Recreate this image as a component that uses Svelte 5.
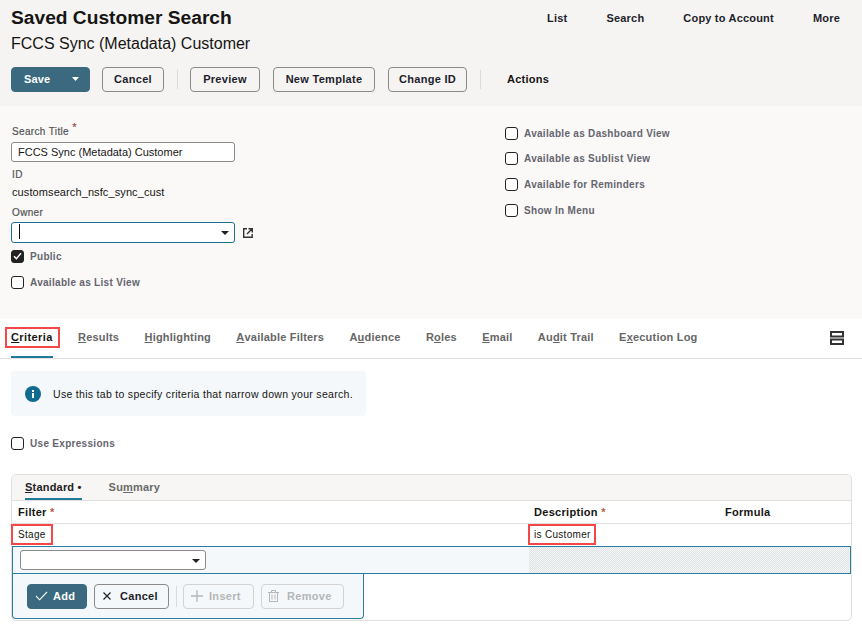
<script lang="ts">
  const navLinks = ['List', 'Search', 'Copy to Account', 'More'];
  const rightChecks = [
    'Available as Dashboard View',
    'Available as Sublist View',
    'Available for Reminders',
    'Show In Menu'
  ];
  // pre/key/post: key is the underlined access key
  const tabs = [
    { pre: '', key: 'R', post: 'esults' },
    { pre: '', key: 'H', post: 'ighlighting' },
    { pre: '', key: 'A', post: 'vailable Filters' },
    { pre: 'A', key: 'u', post: 'dience' },
    { pre: 'R', key: 'o', post: 'les' },
    { pre: '', key: 'E', post: 'mail' },
    { pre: 'Au', key: 'd', post: 'it Trail' },
    { pre: 'E', key: 'x', post: 'ecution Log' }
  ];
</script>

<div class="page">
  <header class="head">
    <div class="title-row">
      <h1>Saved Customer Search</h1>
      <nav class="links">
        {#each navLinks as link}
          <span>{link}</span>
        {/each}
      </nav>
    </div>
    <div class="subtitle">FCCS Sync (Metadata) Customer</div>
    <div class="toolbar">
      <button class="btn primary save">
        <span>Save</span>
        <svg width="7" height="4" viewBox="0 0 7 4"><path d="M0 0h7L3.5 4z" fill="#fff" /></svg>
      </button>
      <button class="btn w-cancel">Cancel</button>
      <i class="sep"></i>
      <button class="btn w-preview">Preview</button>
      <button class="btn w-template">New Template</button>
      <button class="btn w-change">Change ID</button>
      <i class="sep"></i>
      <span class="actions">Actions</span>
    </div>
  </header>

  <section class="form">
    <div class="col-left">
      <div class="label first">Search Title <sup>*</sup></div>
      <div class="input">FCCS Sync (Metadata) Customer</div>
      <div class="label id">ID</div>
      <div class="value">customsearch_nsfc_sync_cust</div>
      <div class="label owner">Owner</div>
      <div class="owner-row">
        <div class="input focus">
          <i class="caret"></i>
          <svg class="arrow" width="8" height="4" viewBox="0 0 8 4"><path d="M0 0h8L4 4z" fill="#222" /></svg>
        </div>
        <svg class="open-icon" width="10" height="10" viewBox="0 0 10 10" fill="none" stroke="#333" stroke-width="1.4">
          <path d="M4 .8H.7v8.5h8.5V6M5.5 .7h3.8v3.8M9.2 .8 4 6" />
        </svg>
      </div>
      <label class="check public">
        <span class="box on">
          <svg width="9" height="8" viewBox="0 0 9 8" fill="none" stroke="#fff" stroke-width="1.4"><path d="M1 4.2 3.4 6.6 8 1.2" /></svg>
        </span>
        Public
      </label>
      <label class="check list-view"><span class="box"></span>Available as List View</label>
    </div>
    <div class="col-right">
      {#each rightChecks as item}
        <label class="check"><span class="box"></span>{item}</label>
      {/each}
    </div>
  </section>

  <div class="tabs">
    <span class="tab active"><span class="mark"><u>C</u>riteria</span></span>
    {#each tabs as t}
      <span class="tab">{t.pre}<u>{t.key}</u>{t.post}</span>
    {/each}
    <svg class="layout-icon" width="14" height="14" viewBox="0 0 14 14" fill="none" stroke="#333" stroke-width="2">
      <rect x="1" y="1" width="12" height="4.5" />
      <rect x="1" y="8.5" width="12" height="4.5" />
    </svg>
  </div>

  <main class="content">
    <div class="info">
      <svg width="16" height="16" viewBox="0 0 16 16">
        <circle cx="8" cy="8" r="8" fill="#0f6b8f" />
        <rect x="7" y="7" width="2" height="5" fill="#fff" />
        <rect x="7" y="4" width="2" height="2" fill="#fff" />
      </svg>
      Use this tab to specify criteria that narrow down your search.
    </div>

    <label class="check expr"><span class="box"></span>Use Expressions</label>

    <div class="panel">
      <div class="subtabs">
        <span class="subtab active"><u>S</u>tandard •</span>
        <span class="subtab">Su<u>m</u>mary</span>
      </div>
      <div class="grid-row heads">
        <div>Filter <b>*</b></div>
        <div>Description <b>*</b></div>
        <div>Formula</div>
      </div>
      <div class="grid-row data">
        <div><span class="mark cell">Stage</span></div>
        <div><span class="mark cell desc">is Customer</span></div>
        <div></div>
      </div>
      <div class="edit-row">
        <div class="edit-left">
          <div class="input select">
            <svg class="arrow" width="8" height="4" viewBox="0 0 8 4"><path d="M0 0h8L4 4z" fill="#222" /></svg>
          </div>
        </div>
        <div class="hatch"></div>
      </div>
      <div class="row-actions">
        <button class="btn primary add">
          <svg width="13" height="10" viewBox="0 0 13 10" fill="none" stroke="#fff" stroke-width="1.1"><path d="M1 5l3.6 3.8L12 1" /></svg>
          Add
        </button>
        <button class="btn dark">
          <svg width="8" height="8" viewBox="0 0 8 8" fill="none" stroke="#222" stroke-width="1.2"><path d="M.5 .5l7 7M7.5 .5l-7 7" /></svg>
          Cancel
        </button>
        <i class="sep small"></i>
        <button class="btn off insert">
          <svg width="12" height="12" viewBox="0 0 12 12" fill="none" stroke="#b5b5b5" stroke-width="1.3"><path d="M6 0v12M0 6h12" /></svg>
          Insert
        </button>
        <button class="btn off remove">
          <svg width="11" height="12" viewBox="0 0 11 12" fill="none" stroke="#b5b5b5" stroke-width="1"><path d="M0 2.5h11M3.5 2.5V.5h4v2M1.5 2.5v9h8v-9M4 4.5v5M7 4.5v5" /></svg>
          Remove
        </button>
      </div>
    </div>
  </main>
</div>

<style>
  :global(body) {
    margin: 0;
    background: #fff;
  }

  .page {
    width: 862px;
    height: 628px;
    overflow: hidden;
    font-family: 'Liberation Sans', Arial, sans-serif;
    color: #161513;
  }

  .head {
    height: 106px;
    box-sizing: border-box;
    background: #f5f4f2;
    padding: 6px 0 0 11px;
  }

  .title-row {
    display: flex;
    justify-content: space-between;
    height: 24px;
  }

  h1 {
    margin: 0;
    font-size: 19.2px;
    line-height: 23px;
    font-weight: 700;
  }

  .links {
    display: flex;
    gap: 39px;
    padding-right: 22px;
    font-size: 11px;
    font-weight: 700;
    line-height: 24px;
    letter-spacing: 0.2px;
    color: #1d1d2b;
  }

  .subtitle {
    margin-top: 5px;
    font-size: 16px;
    line-height: 18px;
  }

  .toolbar {
    display: flex;
    align-items: center;
    gap: 13px;
    margin-top: 14px;
  }

  .btn {
    height: 25px;
    box-sizing: border-box;
    padding: 0 0 1px;
    border: 1px solid #8c8a87;
    border-radius: 4px;
    background: transparent;
    font-family: inherit;
    font-size: 11px;
    font-weight: 700;
    letter-spacing: 0.3px;
    color: #1d1d2b;
  }

  .primary {
    background: #3b6a80;
    border-color: #3b6a80;
    color: #fff;
  }

  .save {
    width: 79px;
    display: flex;
    align-items: center;
    justify-content: space-between;
    padding: 0 10px 1px 12px;
    letter-spacing: 0.15px;
  }

  .w-cancel {
    width: 62px;
    margin-left: -1px;
  }

  .w-preview {
    width: 70px;
    margin-left: -1px;
  }

  .w-template {
    width: 102px;
  }

  .w-change {
    width: 79px;
  }

  .sep {
    width: 1px;
    height: 19px;
    background: #dcdad7;
  }

  .actions {
    margin: 0 0 1px 13px;
    font-size: 11px;
    font-weight: 700;
    letter-spacing: 0.25px;
  }

  .form {
    height: 213px;
    box-sizing: border-box;
    display: flex;
    background: #faf9f8;
  }

  .col-left {
    width: 505px;
    padding: 20px 0 0 12px;
    box-sizing: border-box;
  }

  .col-right {
    display: flex;
    flex-direction: column;
    padding-top: 20px;
    gap: 11.7px;
  }

  .label {
    font-size: 10px;
    line-height: 12px;
    color: #555;
    letter-spacing: 0.35px;
    -webkit-text-stroke: 0.2px #555;
  }

  .first {
    margin-bottom: 4px;
  }

  .label.id {
    margin-top: 7px;
  }

  .label.owner {
    margin-top: 8px;
    margin-bottom: 3px;
  }

  sup {
    color: #c74634;
    font-size: 11px;
    line-height: 0;
  }

  .input {
    position: relative;
    width: 216px;
    height: 18px;
    border: 1px solid #8c8a87;
    border-radius: 3px;
    background: #fff;
    padding-left: 6px;
    margin-left: -1px;
    font-size: 11px;
    line-height: 18px;
  }

  .value {
    margin-top: 4px;
    font-size: 11px;
    line-height: 14px;
    letter-spacing: 0.1px;
  }

  .owner-row {
    display: flex;
    align-items: center;
    gap: 7px;
  }

  .focus {
    height: 19px;
    border-color: #1d6f8f;
  }

  .caret {
    display: block;
    width: 1px;
    height: 15px;
    margin: 1px 0 0 1px;
    background: #111;
  }

  .arrow {
    position: absolute;
    right: 5px;
    top: 8px;
  }

  .open-icon {
    margin-left: 1px;
  }

  .check {
    display: flex;
    align-items: center;
    gap: 6px;
    height: 14px;
    font-size: 10px;
    font-weight: 700;
    letter-spacing: 0.3px;
    color: #65656f;
  }

  .box {
    width: 11px;
    height: 11px;
    flex: none;
    border: 1px solid #222;
    border-radius: 3px;
    background: #fff;
    display: flex;
    align-items: center;
    justify-content: center;
  }

  .box.on {
    background: #222;
  }

  .public {
    margin: 6px 0 0 -1px;
  }

  .list-view {
    margin: 12px 0 0 -1px;
  }

  .tabs {
    height: 40px;
    box-sizing: border-box;
    display: flex;
    gap: 25.3px;
    padding: 0 11px;
    border-bottom: 1px solid #e3e2e0;
    background: #fff;
  }

  .tab {
    display: flex;
    align-items: center;
    height: 39px;
    box-sizing: border-box;
    padding-bottom: 3px;
    font-size: 11px;
    font-weight: 700;
    letter-spacing: 0.2px;
    color: #666;
    white-space: pre;
  }

  .tab.active {
    color: #161513;
    letter-spacing: 0.4px;
    box-shadow: inset 0 -2px 0 #1f7a9c;
  }

  .mark {
    outline: 2px solid #f44848;
    padding: 2px 5px 2px 4px;
    margin: 0 -5px 0 -4px;
    line-height: 13px;
  }

  .layout-icon {
    margin: 12px 7px 0 auto;
  }

  .content {
    padding: 12px 10px 0 11px;
  }

  .info {
    width: 355px;
    height: 45px;
    box-sizing: border-box;
    display: flex;
    align-items: center;
    gap: 12px;
    padding-left: 14px;
    border-radius: 4px;
    background: #f4f8fb;
    font-size: 10.5px;
    letter-spacing: 0.3px;
  }

  .expr {
    margin-top: 20px;
  }

  .panel {
    margin-top: 24px;
    height: 147px;
    box-sizing: border-box;
    border: 1px solid #e0dfdd;
    border-radius: 5px;
  }

  .subtabs {
    height: 25px;
    display: flex;
    gap: 27px;
    padding-left: 13px;
    border-radius: 4px 4px 0 0;
    background: #f7f6f4;
    border-bottom: 1px solid #e0dfdd;
  }

  .subtab {
    display: flex;
    align-items: center;
    padding-bottom: 2px;
    font-size: 11px;
    font-weight: 700;
    letter-spacing: 0.2px;
    color: #6a6a6a;
  }

  .subtab.active {
    color: #222;
    box-shadow: inset 0 -2px 0 #1f7a9c;
  }

  .grid-row {
    display: grid;
    grid-template-columns: 516px 191px 1fr;
    padding-left: 6px;
    align-items: center;
  }

  .heads {
    height: 22px;
    border-bottom: 1px solid #e0dfdd;
    font-size: 11px;
    font-weight: 700;
    letter-spacing: 0.3px;
  }

  .heads b {
    color: #b5613a;
  }

  .data {
    height: 22px;
    padding-bottom: 1px;
    box-sizing: border-box;
    font-size: 10px;
    letter-spacing: 0.3px;
  }

  .cell {
    display: inline-block;
    padding: 2px 5px;
    margin: 0 -5px;
  }

  .cell.desc {
    padding: 2px 3px 2px 4px;
    margin: 0 -3px 0 -4px;
  }

  .edit-row {
    display: flex;
    height: 28px;
    box-sizing: border-box;
    border: 1px solid #2a7f9f;
    background: #f4f8fb;
  }

  .edit-left {
    width: 516px;
    padding: 3px 0 0 7px;
    box-sizing: border-box;
  }

  .select {
    width: 178px;
    margin: 0;
  }

  .hatch {
    flex: 1;
    background: repeating-conic-gradient(#e0e3e4 0 25%, #f4f5f5 0 50%) 0 0 / 2px 2px;
  }

  .row-actions {
    width: 352px;
    height: 45px;
    box-sizing: border-box;
    display: flex;
    align-items: center;
    gap: 7px;
    padding-left: 14px;
    border: 1px solid #2a7f9f;
    border-top: 0;
    border-radius: 0 0 4px 4px;
    background: #f4f8fb;
  }

  .row-actions .btn {
    display: flex;
    align-items: center;
    padding-bottom: 0;
  }

  .row-actions .add {
    width: 60px;
    gap: 5px;
    padding-left: 7px;
  }

  .row-actions .dark {
    width: 75px;
    gap: 9px;
    padding-left: 8px;
  }

  .off {
    border-color: #d4d3d1;
    color: #b5b5b5;
  }

  .row-actions .insert {
    width: 71px;
    gap: 6px;
    padding-left: 7px;
  }

  .row-actions .remove {
    width: 83px;
    gap: 8px;
    padding-left: 6px;
  }

  .sep.small {
    height: 21px;
    margin-right: -1px;
  }
</style>
